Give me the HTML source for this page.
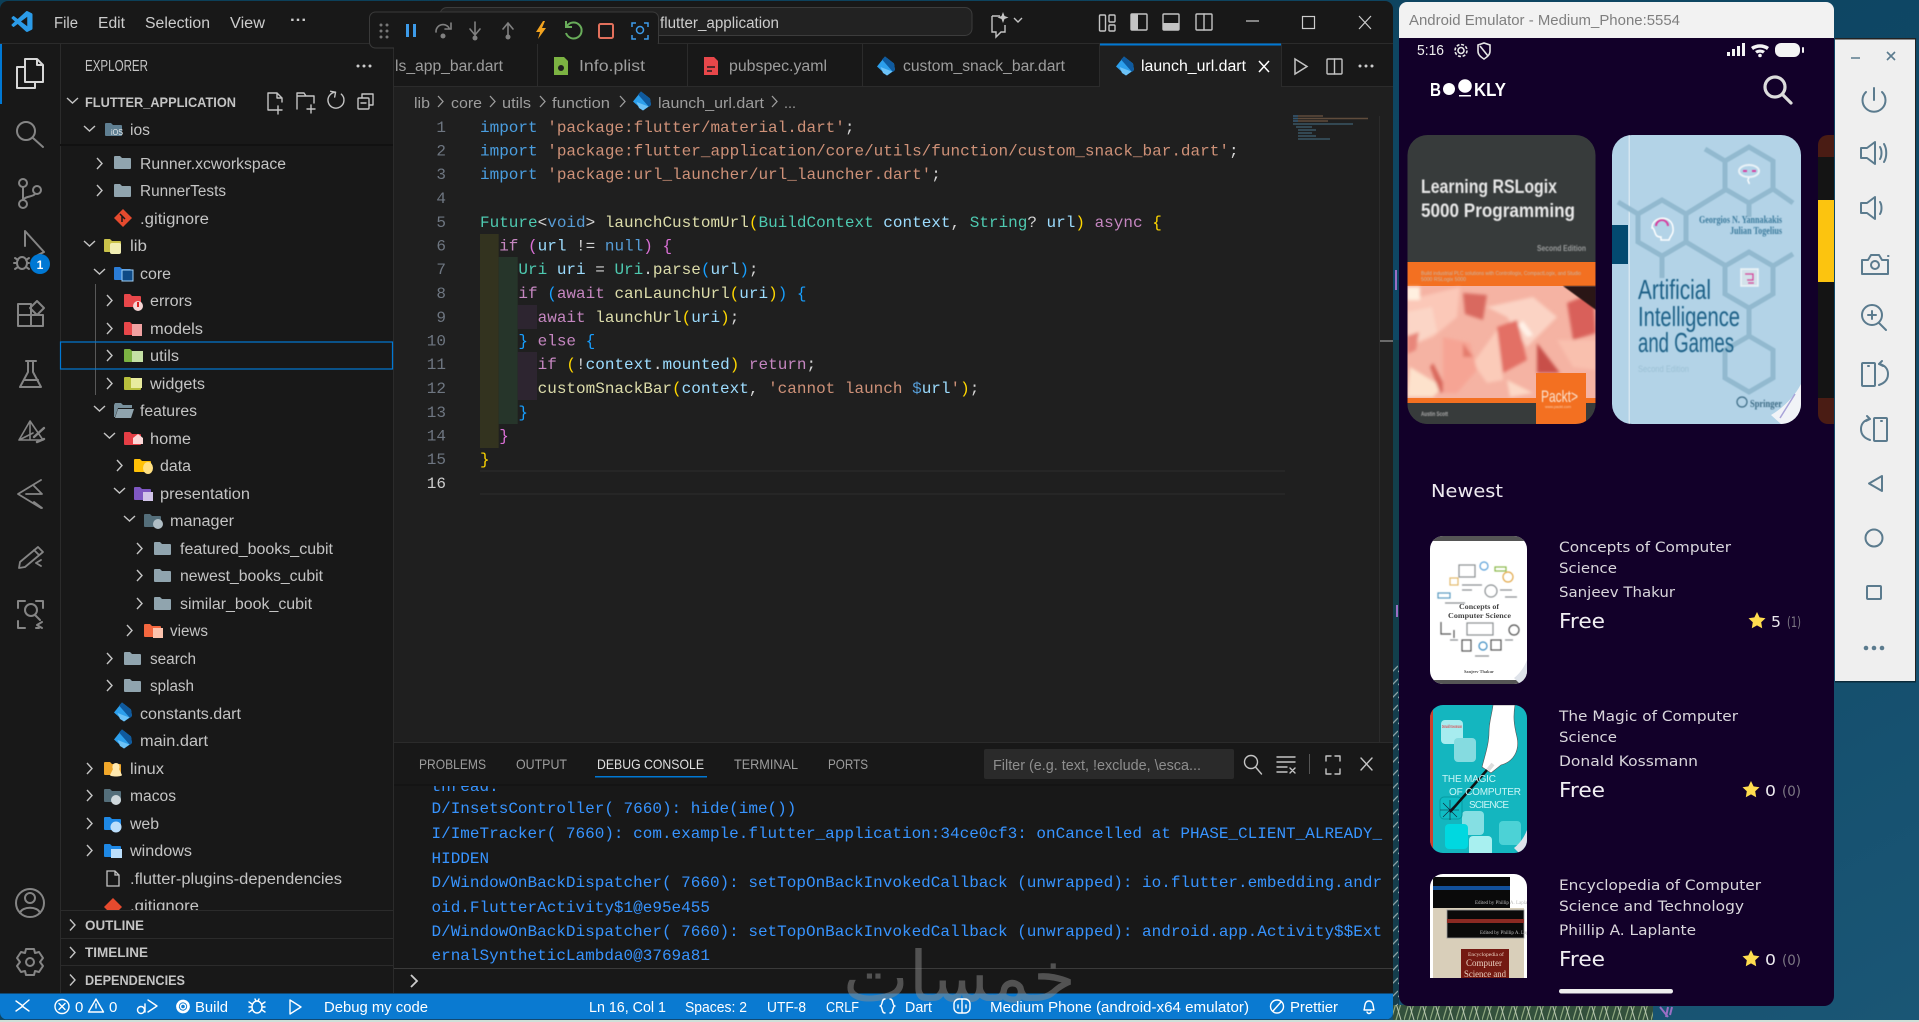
<!DOCTYPE html>
<html><head><meta charset="utf-8"><title>VS Code and Android Emulator</title>
<style>
html,body{margin:0;padding:0;width:1919px;height:1022px;overflow:hidden;background:#114a68}
svg{display:block}
text{white-space:pre}
.u{font-family:"Liberation Sans",sans-serif;font-size:15.5px;fill:#cccccc}
.t{font-family:"Liberation Sans",sans-serif;font-size:15.5px;fill:#c4c4c4}
.m{font-family:"Liberation Mono",monospace;font-size:16px;fill:#d4d4d4}
.ln{font-family:"Liberation Mono",monospace;font-size:16px;fill:#6e7681;text-anchor:end}
.c{font-family:"Liberation Mono",monospace;font-size:16px;fill:#3794ff}
.st{font-family:"Liberation Sans",sans-serif;font-size:15px;fill:#fff}
.p{font-family:"DejaVu Sans",sans-serif;font-size:14.5px;fill:#d9d6dc}
.b{font-family:"Liberation Sans",sans-serif;font-weight:bold;font-size:14px;fill:#c4c4c4}
.ic{fill:none;stroke:#858585;stroke-width:2;stroke-linecap:round;stroke-linejoin:round}
.ti{fill:none;stroke:#c4c4c4;stroke-width:1.4;stroke-linejoin:round;stroke-linecap:round}
.ch{fill:none;stroke:#c4c4c4;stroke-width:1.4}
.em{fill:none;stroke:#5b7b8e;stroke-width:2;stroke-linecap:round;stroke-linejoin:round}
.si{fill:none;stroke:#fff;stroke-width:1.4;stroke-linejoin:round;stroke-linecap:round}
</style></head><body>
<svg width="1919" height="1022" viewBox="0 0 1919 1022" xmlns="http://www.w3.org/2000/svg">
<defs>
<linearGradient id="bg" x1="0" y1="0" x2="1" y2="1"><stop offset="0" stop-color="#0c3f58"/><stop offset=".6" stop-color="#0f4866"/><stop offset="1" stop-color="#1a5675"/></linearGradient>
<pattern id="pl" width="13" height="20" patternUnits="userSpaceOnUse"><rect width="13" height="20" fill="#33503c"/><path d="M0 20L6 0M5 20L11 0" stroke="#8da67e" stroke-width="1.2"/><path d="M10 20L4 0" stroke="#bcc9b4" stroke-width="1"/></pattern>
<pattern id="pl2" width="6" height="13" patternUnits="userSpaceOnUse"><rect width="6" height="13" fill="#143d4d"/><path d="M0 9L6 3" stroke="#8ea3a6" stroke-width="1.300"/></pattern>
<filter id="bl"><feGaussianBlur stdDeviation="1.6"/></filter>
<filter id="bs"><feGaussianBlur stdDeviation=".5"/></filter>
<path id="chr" d="M0 0l5 5.5-5 5.5"/>
<path id="chd" d="M0 0l5.5 5 5.5-5"/>
<path id="fo" d="M2 1h5l2 2h8a1 1 0 0 1 1 1v9a1 1 0 0 1-1 1H2a1 1 0 0 1-1-1V2a1 1 0 0 1 1-1z"/>
<g id="dart" transform="translate(8 6)"><path d="M-1-9.500L8-2.500 9 4 1 9.500-9 .5z" fill="#2c9fec"/><path d="M-4-6.500L-1-9.500 8-2.500 9 4 7 6z" fill="#0f5a9e"/><path d="M-5.500 1L6.500 5.500 1 9.500-3 7z" fill="#6cc2f7"/></g>
<clipPath id="tree"><rect x="60" y="146" width="334" height="764"/></clipPath>
<clipPath id="list"><rect x="1399" y="500" width="435" height="478"/></clipPath>
<clipPath id="c1"><rect x="1407.500" y="135" width="188" height="289" rx="20"/></clipPath>
<clipPath id="c2"><rect x="1612" y="135" width="189" height="289" rx="20"/></clipPath>
<clipPath id="l1"><rect x="1430" y="536" width="97" height="148" rx="13"/></clipPath>
<clipPath id="l2"><rect x="1430" y="705" width="97" height="148" rx="13"/></clipPath>
<clipPath id="l3"><rect x="1430" y="874" width="97" height="148" rx="13"/></clipPath>
<clipPath id="con"><rect x="394" y="786" width="999" height="182"/></clipPath>
</defs>

<!-- desktop -->
<rect width="1919" height="1022" fill="url(#bg)"/>
<rect x="1393" y="340" width="6" height="320" fill="#123f4c"/>
<rect x="1393" y="660" width="6" height="345" fill="url(#pl2)"/>
<rect x="1393" y="1005" width="260" height="17" fill="url(#pl)"/>
<g stroke="#9a6fc4" stroke-width="2"><path d="M1396 270v20M1397 605v12"/><path d="M1660 1007l8 10M1668 1007l-2 10M1672 1007l-2 8" /></g>
<rect y="1020" width="1919" height="2" fill="#cfe0d8"/>

<!-- window -->
<rect x="0" y="1" width="1393" height="1019" rx="8" fill="#181818"/>
<!-- editor bg -->
<rect x="394" y="87" width="999" height="655" fill="#1f1f1f"/>
<rect x="0" y="43" width="1393" height="1" fill="#2b2b2b"/>
<rect x="60" y="44" width="1" height="949" fill="#2b2b2b"/>
<rect x="393" y="44" width="1" height="949" fill="#2b2b2b"/>

<!-- title bar -->
<path transform="translate(11.500 11) scale(.875)" fill="#2b9be8" d="M23.15 2.587L18.21.21a1.494 1.494 0 0 0-1.705.29l-9.46 8.63-4.12-3.128a.999.999 0 0 0-1.276.057L.327 7.261A1 1 0 0 0 .326 8.74L3.899 12 .326 15.26a1 1 0 0 0 .001 1.479L1.65 17.94a.999.999 0 0 0 1.276.057l4.12-3.128 9.46 8.63a1.492 1.492 0 0 0 1.704.29l4.942-2.377A1.5 1.5 0 0 0 24 20.06V3.939a1.5 1.5 0 0 0-.85-1.352zm-5.146 14.861L10.826 12l7.178-5.448v10.896z"/>
<g class="u"><text x="54" y="28" textLength="24" lengthAdjust="spacingAndGlyphs">File</text><text x="98" y="28" textLength="27" lengthAdjust="spacingAndGlyphs">Edit</text><text x="145" y="28" textLength="65" lengthAdjust="spacingAndGlyphs">Selection</text><text x="230" y="28" textLength="35" lengthAdjust="spacingAndGlyphs">View</text><text x="290" y="25" textLength="17" lengthAdjust="spacingAndGlyphs" font-weight="bold">···</text></g>
<rect x="440" y="7.500" width="532" height="28" rx="7" fill="#222" stroke="#3c3c3c"/>
<text class="u" x="660" y="28" textLength="119" lengthAdjust="spacingAndGlyphs">flutter_application</text>
<!-- debug toolbar -->
<rect x="369.500" y="12" width="289" height="36" rx="6" fill="#181818" stroke="#3a3a3a"/>
<g fill="#777"><circle cx="381" cy="25" r="1.500"/><circle cx="387" cy="25" r="1.500"/><circle cx="381" cy="31" r="1.500"/><circle cx="387" cy="31" r="1.500"/><circle cx="381" cy="37" r="1.500"/><circle cx="387" cy="37" r="1.500"/></g>
<g fill="#3d9be9"><rect x="406" y="24" width="3" height="13"/><rect x="413" y="24" width="3" height="13"/></g>
<g fill="none" stroke="#808080" stroke-width="1.600" stroke-linecap="round"><path d="M436 32a7 7 0 0 1 13-4"/><path d="M451 23v6h-6"/><path d="M475 22v13M470 29l5 6 5-6"/><path d="M508 37V24M503 29l5-6 5 6"/></g>
<g fill="#808080"><circle cx="443" cy="36" r="2.500"/><circle cx="475" cy="38" r="2.500"/><circle cx="508" cy="37" r="2.500"/></g>
<path d="M543 21l-7 11h4l-2 7 8-11h-4l3-7z" fill="#f2a31f"/>
<path d="M567 26a8 8 0 1 1-1 7M566 21v6h6" fill="none" stroke="#69ad5a" stroke-width="2"/>
<rect x="599" y="24" width="14" height="14" rx="1.500" fill="none" stroke="#e2705c" stroke-width="2"/>
<g fill="none" stroke="#3d9be9" stroke-width="1.500"><path d="M632 27v-4h4M648 27v-4h-4M632 35v4h4M648 35v4h-4"/><circle cx="640" cy="30" r="3.500"/></g>
<!-- title right -->
<path d="M992 16h8M992 16v16h4v5l5-5h4v-7" fill="none" stroke="#c4c4c4" stroke-width="1.400"/><path d="M1003 12l1.500 4 4 1.500-4 1.500-1.500 4-1.500-4-4-1.500 4-1.500z" fill="#c4c4c4"/>
<path d="M1014 18l4 4 4-4" class="ch"/>
<g class="ti"><rect x="1099.500" y="15" width="6" height="16" rx="1"/><rect x="1109" y="15" width="6" height="7" rx="1"/><rect x="1109" y="25" width="6" height="6" rx="1"/><rect x="1131" y="14" width="16" height="16" rx="1"/><rect x="1163" y="14" width="16" height="16" rx="1"/><rect x="1196" y="14" width="16" height="16" rx="1"/><path d="M1204 14v16"/></g>
<rect x="1131" y="14" width="7" height="16" fill="#c4c4c4"/><rect x="1163" y="23" width="16" height="7" fill="#c4c4c4"/>
<path d="M1246 21h13" stroke="#ccc" stroke-width="1.200"/>
<rect x="1302.500" y="16.500" width="12" height="12" fill="none" stroke="#ccc" stroke-width="1.200"/>
<path d="M1359 16l12 13M1371 16l-12 13" stroke="#ccc" stroke-width="1.200"/>

<!-- activity bar -->
<rect x="0" y="44" width="2" height="60" fill="#0078d4"/>
<g fill="none" stroke="#d7d7d7" stroke-width="2" stroke-linejoin="round"><path d="M25 67H17v21h18v-6"/><path d="M25 59h12l6 6v17H25z" fill="#181818"/><path d="M37 59v6h6"/></g>
<g class="ic">
<circle cx="26" cy="131" r="9"/><path d="M33 138l10 9"/>
<circle cx="23" cy="183" r="4"/><circle cx="23" cy="204" r="4"/><circle cx="37" cy="190" r="4"/><path d="M23 187v13M35 194c-2 3-10 2-12 6"/>
<path d="M25 246V231L44 252l-6 3"/><ellipse cx="22" cy="263" rx="5" ry="6"/><path d="M15 258l3 2M14 263h3M15 269l3-2M29 258l-3 2M29 263h-2M29 269l-3-2"/>
<path d="M18 304h13v22H18zM18 315h25v11H31"/><path d="M37 301l7 7-7 7-7-7z"/>
<path d="M26 361h10M28 361v11l-8 15h21l-8-15v-11M24 380h14"/>
<path d="M30 421l-11 19h24zM30 421v19M19 440l14-7" stroke-width="1.600"/><path d="M34 437l10-9M37 442l7-3" stroke-width="2.400"/>
<path d="M41 480l-23 14 23 14M26 494h16l-8-8M34 502l8 6" stroke-width="1.800"/>
<path d="M20 562l18-15 5 5-18 15-6 1zM34 550l5 5M36 563l5-3M36 563l5 3" stroke-width="1.800"/>
<path d="M18 608v-7h7M43 608v-7h-7M18 621v7h7M36 628h3" /><circle cx="31" cy="610" r="6"/><path d="M35 615l5 5M37 625l5-3M37 625l5 3"/>
<circle cx="30" cy="903" r="14"/><circle cx="30" cy="898" r="5"/><path d="M20 913c2-7 18-7 20 0"/>
<path d="M26 949h8l1 4 4-1 4 6-3 4 3 4-4 6-4-1-1 4h-8l-1-4-4 1-4-6 3-4-3-4 4-6 4 1z"/><circle cx="30" cy="962" r="4"/>
</g>
<circle cx="40" cy="264" r="10" fill="#0078d4"/><text x="40" y="269" font-family="Liberation Sans" font-size="12" font-weight="bold" fill="#fff" text-anchor="middle">1</text>

<!-- sidebar -->
<text class="t" x="85" y="71" textLength="63" lengthAdjust="spacingAndGlyphs" font-size="14">EXPLORER</text>
<g fill="#ccc"><circle cx="358" cy="66" r="1.500"/><circle cx="364" cy="66" r="1.500"/><circle cx="370" cy="66" r="1.500"/></g>
<use href="#chd" x="67" y="98" class="ch"/>
<text class="b" x="85" y="107" textLength="151" lengthAdjust="spacingAndGlyphs">FLUTTER_APPLICATION</text>
<g class="ti"><path d="M268 110v-17h9l5 5v4M277 93v5h5M268 110h6M278 106v8M274 110h8"/><path d="M297 109V93h7l2 3h8v7M297 96h17M311 105v8M307 109h8"/><path d="M340 93a8 8 0 1 1-6-1M329 92l5 0 0 5" transform="rotate(10 334 101)"/><rect x="358" y="98" width="11" height="11" rx="1"/><path d="M362 98v-4h11v11h-4M361 103h5"/></g>
<use href="#chd" x="84" y="126" class="ch"/>
<use href="#fo" x="104" y="122" fill="#5f7f92"/><text font-family="Liberation Sans,sans-serif" font-size="8" fill="#e4e8ea" x="111" y="135" textLength="12" lengthAdjust="spacingAndGlyphs">iOS</text>
<text class="t" x="130" y="135" textLength="20" lengthAdjust="spacingAndGlyphs">ios</text>
<rect x="60" y="144" width="333" height="2" fill="#111"/>

<g clip-path="url(#tree)">
<g class="ch">
<use href="#chr" x="97" y="158"/><use href="#chr" x="97" y="185"/>
<use href="#chd" x="84" y="241"/><use href="#chd" x="94" y="269"/>
<use href="#chr" x="107" y="295"/><use href="#chr" x="107" y="323"/><use href="#chr" x="107" y="350"/><use href="#chr" x="107" y="378"/>
<use href="#chd" x="94" y="406"/><use href="#chd" x="104" y="433"/>
<use href="#chr" x="117" y="460"/><use href="#chd" x="114" y="488"/><use href="#chd" x="124" y="516"/>
<use href="#chr" x="137" y="543"/><use href="#chr" x="137" y="570"/><use href="#chr" x="137" y="598"/>
<use href="#chr" x="127" y="625"/><use href="#chr" x="107" y="653"/><use href="#chr" x="107" y="680"/>
<use href="#chr" x="87" y="763"/><use href="#chr" x="87" y="790"/><use href="#chr" x="87" y="818"/><use href="#chr" x="87" y="845"/>
</g>
<rect x="95" y="284" width="1" height="111" fill="#585858"/>
<!-- folder icons -->
<use href="#fo" x="113" y="155" fill="#90a4ae"/>
<use href="#fo" x="113" y="183" fill="#90a4ae"/>
<path d="M123 209l9 9-9 9-9-9z" fill="#e64a2e"/><path d="M120 214l5 5M122 216v6" stroke="#181818" stroke-width="1.500"/>
<use href="#fo" x="103" y="238" fill="#c9c24a"/><rect x="110" y="243" width="11" height="11" rx="2" fill="#f1eeb3"/>
<use href="#fo" x="113" y="266" fill="#2a7cd6"/><rect x="122" y="270" width="11" height="11" fill="#0e4a86" stroke="#9fd0f7"/>
<use href="#fo" x="123" y="293" fill="#e8474a"/><circle cx="138" cy="306" r="5" fill="#f6d5d5"/><rect x="137" y="302" width="2" height="5" fill="#d22"/>
<use href="#fo" x="123" y="321" fill="#e8474a"/><rect x="132" y="324" width="10" height="12" fill="#f1a2a2"/>
<use href="#fo" x="123" y="348" fill="#7cb342"/><rect x="132" y="351" width="11" height="11" fill="#c5e1a5"/>
<use href="#fo" x="123" y="376" fill="#b8bf3c"/><rect x="131" y="378" width="11" height="10" fill="#e8eb9e"/>
<path d="M114 405l1-2h6l2 2h9v3h-14l-3 9h-1z" fill="#78909c"/><path d="M118 409h16l-3 9h-16z" fill="#90a4ae"/>
<use href="#fo" x="123" y="431" fill="#e53e45"/><path d="M133 444v-6l5-4 5 4v6z" fill="#fbd7d7"/>
<use href="#fo" x="133" y="458" fill="#ffc107"/><ellipse cx="148" cy="468" rx="5" ry="6" fill="#ffe082"/>
<use href="#fo" x="133" y="486" fill="#7e57c2"/><rect x="143" y="492" width="10" height="9" fill="#d1c4e9"/>
<use href="#fo" x="143" y="513" fill="#546e7a"/><circle cx="158" cy="524" r="5" fill="#b0bec5"/>
<use href="#fo" x="153" y="541" fill="#90a4ae"/><use href="#fo" x="153" y="568" fill="#90a4ae"/><use href="#fo" x="153" y="596" fill="#90a4ae"/>
<use href="#fo" x="143" y="623" fill="#f4673f"/><rect x="153" y="628" width="10" height="10" fill="#fcc3ad"/>
<use href="#fo" x="123" y="651" fill="#90a4ae"/><use href="#fo" x="123" y="678" fill="#90a4ae"/>
<use href="#dart" x="115" y="706"/><use href="#dart" x="115" y="733"/>
<use href="#fo" x="103" y="761" fill="#f0a72a"/><path d="M116 763c4 0 4 5 3 6l3 6c0 2-12 2-12 0l3-6c-1-1-1-6 3-6z" fill="#ffe9b0"/>
<use href="#fo" x="103" y="788" fill="#546e7a"/><circle cx="116" cy="800" r="5" fill="#cfd8dc"/>
<use href="#fo" x="103" y="816" fill="#1e88e5"/><circle cx="116" cy="827" r="5.500" fill="#bbdefb"/>
<use href="#fo" x="103" y="843" fill="#1e88e5"/><rect x="111" y="849" width="11" height="9" fill="#bbdefb"/>
<path d="M107 871h8l4 4v11h-12zM115 871v4h4" fill="none" stroke="#c4c4c4" stroke-width="1.300"/>
<path d="M113 898l9 9-9 9-9-9z" fill="#e64a2e"/>
<!-- labels -->
<g class="t">
<text x="140" y="169" textLength="146" lengthAdjust="spacingAndGlyphs">Runner.xcworkspace</text>
<text x="140" y="196" textLength="86" lengthAdjust="spacingAndGlyphs">RunnerTests</text>
<text x="140" y="224" textLength="69" lengthAdjust="spacingAndGlyphs">.gitignore</text>
<text x="130" y="251" textLength="17" lengthAdjust="spacingAndGlyphs">lib</text>
<text x="140" y="279" textLength="31" lengthAdjust="spacingAndGlyphs">core</text>
<text x="150" y="306" textLength="42" lengthAdjust="spacingAndGlyphs">errors</text>
<text x="150" y="334" textLength="53" lengthAdjust="spacingAndGlyphs">models</text>
<text x="150" y="361" textLength="29" lengthAdjust="spacingAndGlyphs">utils</text>
<text x="150" y="389" textLength="55" lengthAdjust="spacingAndGlyphs">widgets</text>
<text x="140" y="416" textLength="57" lengthAdjust="spacingAndGlyphs">features</text>
<text x="150" y="444" textLength="41" lengthAdjust="spacingAndGlyphs">home</text>
<text x="160" y="471" textLength="31" lengthAdjust="spacingAndGlyphs">data</text>
<text x="160" y="499" textLength="90" lengthAdjust="spacingAndGlyphs">presentation</text>
<text x="170" y="526" textLength="64" lengthAdjust="spacingAndGlyphs">manager</text>
<text x="180" y="554" textLength="153" lengthAdjust="spacingAndGlyphs">featured_books_cubit</text>
<text x="180" y="581" textLength="143" lengthAdjust="spacingAndGlyphs">newest_books_cubit</text>
<text x="180" y="609" textLength="132" lengthAdjust="spacingAndGlyphs">similar_book_cubit</text>
<text x="170" y="636" textLength="38" lengthAdjust="spacingAndGlyphs">views</text>
<text x="150" y="664" textLength="46" lengthAdjust="spacingAndGlyphs">search</text>
<text x="150" y="691" textLength="44" lengthAdjust="spacingAndGlyphs">splash</text>
<text x="140" y="719" textLength="101" lengthAdjust="spacingAndGlyphs">constants.dart</text>
<text x="140" y="746" textLength="68" lengthAdjust="spacingAndGlyphs">main.dart</text>
<text x="130" y="774" textLength="34" lengthAdjust="spacingAndGlyphs">linux</text>
<text x="130" y="801" textLength="46" lengthAdjust="spacingAndGlyphs">macos</text>
<text x="130" y="829" textLength="29" lengthAdjust="spacingAndGlyphs">web</text>
<text x="130" y="856" textLength="62" lengthAdjust="spacingAndGlyphs">windows</text>
<text x="130" y="884" textLength="212" lengthAdjust="spacingAndGlyphs">.flutter-plugins-dependencies</text>
<text x="130" y="911" textLength="69" lengthAdjust="spacingAndGlyphs">.gitignore</text>
</g>
</g>
<rect x="60.500" y="342" width="332" height="27" fill="none" stroke="#0078d4" stroke-width="1.200"/>
<rect x="60" y="910" width="333" height="1" fill="#2b2b2b"/><rect x="60" y="938" width="333" height="1" fill="#2b2b2b"/><rect x="60" y="965" width="333" height="1" fill="#2b2b2b"/>
<g class="ch"><use href="#chr" x="70" y="919.500"/><use href="#chr" x="70" y="947"/><use href="#chr" x="70" y="974.500"/></g>
<g class="b"><text x="85" y="930" textLength="59" lengthAdjust="spacingAndGlyphs">OUTLINE</text><text x="85" y="957" textLength="63" lengthAdjust="spacingAndGlyphs">TIMELINE</text><text x="85" y="985" textLength="100" lengthAdjust="spacingAndGlyphs">DEPENDENCIES</text></g>

<!-- tabs -->
<rect x="394" y="44" width="999" height="43" fill="#181818"/>
<rect x="394" y="86" width="999" height="1" fill="#2b2b2b"/>
<rect x="1100" y="44" width="181" height="43" fill="#1f1f1f"/><rect x="1100" y="43.500" width="181" height="2" fill="#0078d4"/>
<g fill="#2b2b2b"><rect x="537" y="44" width="1" height="43"/><rect x="687" y="44" width="1" height="43"/><rect x="862" y="44" width="1" height="43"/><rect x="1099" y="44" width="1" height="43"/><rect x="1281" y="44" width="1" height="43"/></g>
<g class="t">
<text x="395" y="71" textLength="108" lengthAdjust="spacingAndGlyphs" style="fill:#9d9d9d">ls_app_bar.dart</text>
<text x="579" y="71" textLength="66" lengthAdjust="spacingAndGlyphs" style="fill:#9d9d9d">Info.plist</text>
<text x="729" y="71" textLength="98" lengthAdjust="spacingAndGlyphs" style="fill:#9d9d9d">pubspec.yaml</text>
<text x="903" y="71" textLength="162" lengthAdjust="spacingAndGlyphs" style="fill:#9d9d9d">custom_snack_bar.dart</text>
<text x="1141" y="71" textLength="105" lengthAdjust="spacingAndGlyphs" style="fill:#fff">launch_url.dart</text>
</g>
<path d="M554 57h10l4 4v14h-14z" fill="#7cb342"/><circle cx="561" cy="68" r="3" fill="#1f1f1f"/>
<path d="M704 57h10l4 4v14h-14z" fill="#e8474a"/><path d="M707 67h8M707 71h5" stroke="#1f1f1f" stroke-width="1.600"/>
<use href="#dart" x="878" y="60"/><use href="#dart" x="1117" y="60"/>
<path d="M1259 61l10 11M1269 61l-10 11" stroke="#fff" stroke-width="1.500"/>
<path d="M1295 59l12 7.500-12 7.500z" fill="none" stroke="#c4c4c4" stroke-width="1.500"/>
<g class="ti"><rect x="1327" y="59" width="15" height="15" rx="1"/><path d="M1334.500 59v15"/></g>
<g fill="#ccc"><circle cx="1360" cy="66" r="1.500"/><circle cx="1366" cy="66" r="1.500"/><circle cx="1372" cy="66" r="1.500"/></g>

<!-- breadcrumb -->
<g class="t" style="font-size:15px">
<text x="414" y="108" textLength="16" lengthAdjust="spacingAndGlyphs" style="fill:#9d9d9d">lib</text>
<text x="451" y="108" textLength="31" lengthAdjust="spacingAndGlyphs" style="fill:#9d9d9d">core</text>
<text x="502" y="108" textLength="29" lengthAdjust="spacingAndGlyphs" style="fill:#9d9d9d">utils</text>
<text x="552" y="108" textLength="58" lengthAdjust="spacingAndGlyphs" style="fill:#9d9d9d">function</text>
<text x="658" y="108" textLength="106" lengthAdjust="spacingAndGlyphs" style="fill:#9d9d9d">launch_url.dart</text>
<text x="784" y="108" textLength="12" lengthAdjust="spacingAndGlyphs" style="fill:#9d9d9d">...</text>
</g>
<g fill="none" stroke="#9d9d9d" stroke-width="1.300"><use href="#chr" x="438" y="96"/><use href="#chr" x="490" y="96"/><use href="#chr" x="540" y="96"/><use href="#chr" x="620" y="96"/><use href="#chr" x="772" y="96"/></g>
<use href="#dart" x="634" y="95"/>

<!-- indent rainbow -->
<rect x="480" y="234" width="18.700" height="214" fill="#33331f"/>
<rect x="498.700" y="257" width="19" height="167" fill="#26352a"/>
<g fill="#2d2530"><rect x="517.700" y="305" width="19.300" height="24"/><rect x="517.700" y="352" width="19.300" height="48"/></g>
<path d="M480 471h805M480 494h805" stroke="#2b2b2b" stroke-width="1.200" fill="none"/>
<!-- line numbers -->
<g class="ln">
<text x="446" y="132">1</text><text x="446" y="155.500">2</text><text x="446" y="179">3</text><text x="446" y="203">4</text><text x="446" y="227">5</text><text x="446" y="250.500">6</text><text x="446" y="274">7</text><text x="446" y="298">8</text><text x="446" y="322">9</text><text x="446" y="345.500">10</text><text x="446" y="369">11</text><text x="446" y="393">12</text><text x="446" y="417">13</text><text x="446" y="440.500">14</text><text x="446" y="464">15</text><text x="446" y="488" style="fill:#ccc">16</text>
</g>
<!-- code -->
<g class="m" xml:space="preserve">
<text x="480" y="132"><tspan fill="#4a9ee0">import</tspan> <tspan fill="#ce9178">'package:flutter/material.dart'</tspan>;</text>
<text x="480" y="155.500"><tspan fill="#4a9ee0">import</tspan> <tspan fill="#ce9178">'package:flutter_application/core/utils/function/custom_snack_bar.dart'</tspan>;</text>
<text x="480" y="179"><tspan fill="#4a9ee0">import</tspan> <tspan fill="#ce9178">'package:url_launcher/url_launcher.dart'</tspan>;</text>
<text x="480" y="227"><tspan fill="#4ec9b0">Future</tspan>&lt;<tspan fill="#569cd6">void</tspan>&gt; <tspan fill="#dcdcaa">launchCustomUrl</tspan><tspan fill="#ffd700">(</tspan><tspan fill="#4ec9b0">BuildContext</tspan> <tspan fill="#9cdcfe">context</tspan>, <tspan fill="#4ec9b0">String</tspan>? <tspan fill="#9cdcfe">url</tspan><tspan fill="#ffd700">)</tspan> <tspan fill="#c586c0">async</tspan> <tspan fill="#ffd700">{</tspan></text>
<text x="480" y="250.500">  <tspan fill="#c586c0">if</tspan> <tspan fill="#da70d6">(</tspan><tspan fill="#9cdcfe">url</tspan> != <tspan fill="#569cd6">null</tspan><tspan fill="#da70d6">)</tspan> <tspan fill="#da70d6">{</tspan></text>
<text x="480" y="274">    <tspan fill="#4ec9b0">Uri</tspan> <tspan fill="#9cdcfe">uri</tspan> = <tspan fill="#4ec9b0">Uri</tspan>.<tspan fill="#dcdcaa">parse</tspan><tspan fill="#179fff">(</tspan><tspan fill="#9cdcfe">url</tspan><tspan fill="#179fff">)</tspan>;</text>
<text x="480" y="298">    <tspan fill="#c586c0">if</tspan> <tspan fill="#179fff">(</tspan><tspan fill="#c586c0">await</tspan> <tspan fill="#dcdcaa">canLaunchUrl</tspan><tspan fill="#ffd700">(</tspan><tspan fill="#9cdcfe">uri</tspan><tspan fill="#ffd700">)</tspan><tspan fill="#179fff">)</tspan> <tspan fill="#179fff">{</tspan></text>
<text x="480" y="322">      <tspan fill="#c586c0">await</tspan> <tspan fill="#dcdcaa">launchUrl</tspan><tspan fill="#ffd700">(</tspan><tspan fill="#9cdcfe">uri</tspan><tspan fill="#ffd700">)</tspan>;</text>
<text x="480" y="345.500">    <tspan fill="#179fff">}</tspan> <tspan fill="#c586c0">else</tspan> <tspan fill="#179fff">{</tspan></text>
<text x="480" y="369">      <tspan fill="#c586c0">if</tspan> <tspan fill="#ffd700">(</tspan>!<tspan fill="#9cdcfe">context</tspan>.<tspan fill="#9cdcfe">mounted</tspan><tspan fill="#ffd700">)</tspan> <tspan fill="#c586c0">return</tspan>;</text>
<text x="480" y="393">      <tspan fill="#dcdcaa">customSnackBar</tspan><tspan fill="#ffd700">(</tspan><tspan fill="#9cdcfe">context</tspan>, <tspan fill="#ce9178">'cannot launch </tspan><tspan fill="#569cd6">$</tspan><tspan fill="#9cdcfe">url</tspan><tspan fill="#ce9178">'</tspan><tspan fill="#ffd700">)</tspan>;</text>
<text x="480" y="417">    <tspan fill="#179fff">}</tspan></text>
<text x="480" y="440.500">  <tspan fill="#da70d6">}</tspan></text>
<text x="480" y="464"><tspan fill="#ffd700">}</tspan></text>
</g>
<!-- minimap -->
<g opacity=".6">
<path d="M1293 116h30M1293 118.500h75M1293 121h35" stroke="#8a6a50" stroke-width="1.500"/>
<path d="M1293 124h60M1296 127h16M1298 130h18M1298 133h14M1298 136h18M1298 139h32" stroke="#4d7c93" stroke-width="1.500"/>
<path d="M1293 116h5M1293 118.500h5M1293 121h5" stroke="#3b79a8" stroke-width="1.500"/>
</g>
<rect x="1379" y="116" width="1" height="626" fill="#2b2b2b"/>
<rect x="1380" y="340" width="13" height="2" fill="#6a6a6a"/>

<!-- panel -->
<rect x="394" y="742" width="999" height="251" fill="#181818"/>
<rect x="394" y="742" width="999" height="1" fill="#2b2b2b"/>
<g class="t" style="font-size:14px">
<text x="419" y="769" textLength="67" lengthAdjust="spacingAndGlyphs" style="fill:#9d9d9d">PROBLEMS</text>
<text x="516" y="769" textLength="51" lengthAdjust="spacingAndGlyphs" style="fill:#9d9d9d">OUTPUT</text>
<text x="597" y="769" textLength="107" lengthAdjust="spacingAndGlyphs" style="fill:#e0e0e0">DEBUG CONSOLE</text>
<text x="734" y="769" textLength="64" lengthAdjust="spacingAndGlyphs" style="fill:#9d9d9d">TERMINAL</text>
<text x="828" y="769" textLength="40" lengthAdjust="spacingAndGlyphs" style="fill:#9d9d9d">PORTS</text>
</g>
<rect x="595" y="776" width="112" height="1.500" fill="#0078d4"/>
<rect x="984" y="749" width="250" height="30" rx="2" fill="#2a2a2a"/>
<text class="t" x="993" y="770" textLength="208" lengthAdjust="spacingAndGlyphs" style="fill:#8e8e8e;font-size:15px">Filter (e.g. text, !exclude, \esca...</text>
<g class="ti" stroke-width="1.500"><circle cx="1251" cy="762" r="6.500"/><path d="M1255.500 767l6 7"/><path d="M1277 757h18M1277 762h18M1277 767h10M1277 772h10M1290 768l5 5M1295 768l-5 5"/><path d="M1326 761v-5h5M1340 761v-5h-5M1326 769v5h5M1340 769v5h-5"/><path d="M1361 758l11 12M1372 758l-11 12"/></g>
<rect x="1309" y="754" width="1" height="20" fill="#555"/>
<rect x="394" y="784" width="999" height="2" fill="#141414"/>
<g clip-path="url(#con)"><g class="c">
<text x="431.500" y="791">thread:</text>
<text x="431.500" y="813">D/InsetsController( 7660): hide(ime())</text>
<text x="431.500" y="838">I/ImeTracker( 7660): com.example.flutter_application:34ce0cf3: onCancelled at PHASE_CLIENT_ALREADY_</text>
<text x="431.500" y="863">HIDDEN</text>
<text x="431.500" y="887">D/WindowOnBackDispatcher( 7660): setTopOnBackInvokedCallback (unwrapped): io.flutter.embedding.andr</text>
<text x="431.500" y="912">oid.FlutterActivity$1@e95e455</text>
<text x="431.500" y="936">D/WindowOnBackDispatcher( 7660): setTopOnBackInvokedCallback (unwrapped): android.app.Activity$$Ext</text>
<text x="431.500" y="960">ernalSyntheticLambda0@3769a81</text>
</g></g>
<rect x="394" y="968" width="999" height="1" fill="#3a3a3a"/>
<path d="M411 975l6 6-6 6" fill="none" stroke="#ccc" stroke-width="1.800"/>

<!-- status bar -->
<path d="M0 993.500h1393v19a7 7 0 0 1-7 7H7a7 7 0 0 1-7-7z" fill="#0a7ad1"/>
<text x="843" y="1001" font-family="DejaVu Sans,sans-serif" font-size="70" fill="#8c8c8c" opacity=".5" textLength="233" lengthAdjust="spacingAndGlyphs">خمسات</text>
<path d="M16 1001l7 5-7 5M29 1000l-7 6 7 5" class="si"/>
<g class="si"><circle cx="62" cy="1006.500" r="7"/><path d="M59 1003.500l6 6M65 1003.500l-6 6"/><path d="M96 999l7.500 13h-15zM96 1004v4"/><path d="M148 1000l9 6-9 6M145 1004l0 8"/><circle cx="141" cy="1010" r="3.500"/>
<circle cx="183" cy="1006.500" r="5.500" stroke-width="2.800" stroke-dasharray="2.800 1.500"/><circle cx="183" cy="1006.500" r="2.500"/>
<ellipse cx="257" cy="1007" rx="5" ry="6"/><path d="M249 1002l3 2M249 1007h3M249 1012l3-2M265 1002l-3 2M265 1007h-3M265 1012l-3-2M255 999l1 2M259 999l-1 2"/>
<path d="M290 1000l11 7-11 7z"/>
<path d="M885 999c-4 0-2 7-5 7 3 0 1 7 5 7M890 999c4 0 2 7 5 7-3 0-1 7-5 7"/>
<rect x="954" y="999" width="16" height="14" rx="5"/><path d="M962 999v14M958 1005v3M966 1005v3"/>
<circle cx="1277" cy="1006.500" r="6.500"/><path d="M1273 1011l8-9"/>
<path d="M1364 1010c1-2 0-9 5-9s4 7 5 9zM1367 1012c1 2 3 2 4 0"/></g>
<g class="st">
<text x="75" y="1012">0</text><text x="109" y="1012">0</text>
<text x="195" y="1012" textLength="33" lengthAdjust="spacingAndGlyphs">Build</text>
<text x="324" y="1012" textLength="104" lengthAdjust="spacingAndGlyphs">Debug my code</text>
<text x="589" y="1012" textLength="77" lengthAdjust="spacingAndGlyphs">Ln 16, Col 1</text>
<text x="685" y="1012" textLength="62" lengthAdjust="spacingAndGlyphs">Spaces: 2</text>
<text x="767" y="1012" textLength="39" lengthAdjust="spacingAndGlyphs">UTF-8</text>
<text x="826" y="1012" textLength="33" lengthAdjust="spacingAndGlyphs">CRLF</text>
<text x="905" y="1012" textLength="27" lengthAdjust="spacingAndGlyphs">Dart</text>
<text x="990" y="1012" textLength="259" lengthAdjust="spacingAndGlyphs">Medium Phone (android-x64 emulator)</text>
<text x="1290" y="1012" textLength="48" lengthAdjust="spacingAndGlyphs">Prettier</text>
</g>

<!-- emulator -->
<path d="M1399 10a8 8 0 0 1 8-8h419a8 8 0 0 1 8 8v29h-435z" fill="#f2f2f2"/>
<text x="1409" y="25" font-family="Liberation Sans,sans-serif" font-size="14.500" fill="#7f7f7f" textLength="271" lengthAdjust="spacingAndGlyphs">Android Emulator - Medium_Phone:5554</text>
<path d="M1399 38h435v958a10 10 0 0 1-10 10h-415a10 10 0 0 1-10-10z" fill="#120029"/>
<text x="1417" y="55" font-family="Liberation Sans,sans-serif" font-size="15" fill="#eee" textLength="27" lengthAdjust="spacingAndGlyphs">5:16</text>
<g fill="none" stroke="#e6e6e6" stroke-width="1.600"><circle cx="1461" cy="50.500" r="3"/><circle cx="1461" cy="50.500" r="6" stroke-dasharray="3 1.700"/><path d="M1478 45l6-2 6 2v6c0 4-3 6-6 8-3-2-6-4-6-8z"/><path d="M1480 46l8 10"/></g>
<g fill="#f4f4f4"><rect x="1727" y="52" width="3" height="4"/><rect x="1732" y="49" width="3" height="7"/><rect x="1737" y="46" width="3" height="10"/><rect x="1742" y="43" width="3" height="13" /><path d="M1751 47a16 16 0 0 1 18 0l-2 3a12 12 0 0 0-14 0z"/><path d="M1755 51a10 10 0 0 1 10 0l-2 2.500a6 6 0 0 0-6 0z"/><circle cx="1760" cy="55.500" r="1.800"/><rect x="1775" y="43" width="25" height="14" rx="6"/><rect x="1802" y="47" width="2" height="6" rx="1"/></g>
<!-- Bookly logo -->
<text x="1430" y="96" font-family="Liberation Sans,sans-serif" font-weight="bold" font-size="18" fill="#fff" textLength="11" lengthAdjust="spacingAndGlyphs">B</text>
<circle cx="1449" cy="89" r="6" fill="#fff"/><circle cx="1465" cy="86" r="6.800" fill="#fff"/><rect x="1459" y="95" width="12" height="1.500" fill="#fff"/>
<text x="1474" y="96" font-family="Liberation Sans,sans-serif" font-weight="bold" font-size="18" fill="#fff" textLength="32" lengthAdjust="spacingAndGlyphs">KLY</text>
<g fill="none" stroke="#dcdcdc" stroke-width="3.200"><circle cx="1775" cy="87" r="10"/><path d="M1783 95l8 8" stroke-linecap="round"/></g>

<!-- Book 1 -->
<g clip-path="url(#c1)">
<rect x="1407" y="135" width="189" height="289" fill="#373b3b"/>
<rect x="1407" y="262" width="189" height="24" fill="#f37021"/>
<rect x="1407" y="286" width="189" height="114" fill="#f5b3a3"/>
<g filter="url(#bl)">
<path d="M1407 300L1460 287 1457 317 1433 337 1407 347z" fill="#fbc8b8"/>
<path d="M1407 287h13v13h-13z" fill="#fff0e0"/>
<path d="M1463 293l24 2-4 25-18-6z" fill="#d9695f"/>
<path d="M1487 307L1533 297 1557 317 1527 347 1507 317z" fill="#fbd3c4"/>
<path d="M1497 327L1517 320 1527 360 1503 373z" fill="#e36f65"/>
<path d="M1473 363L1497 330 1503 380 1487 383z" fill="#fbcbb9"/>
<path d="M1537 343L1560 373 1537 373z" fill="#c8504a"/>
<path d="M1567 303L1593 293 1596 333 1573 340z" fill="#d9605a"/>
<path d="M1557 340h39v30l-23-3z" fill="#f9c0ae"/>
<path d="M1410 367L1443 387 1433 397 1407 397z" fill="#fde2cc"/>
<path d="M1433 363L1447 390 1440 393 1430 367z" fill="#d9685c"/>
<path d="M1443 337L1470 343 1477 370 1457 393 1443 393z" fill="#f6a494"/>
<path d="M1463 343L1473 357 1463 357z" fill="#e47a6c"/>
<path d="M1507 380L1533 393 1510 397z" fill="#fcd8c6"/>
<path d="M1407 312l25-5 5 25-30 15z" fill="#fbd5c6"/>
<path d="M1407 336l12-4-3 18-9 4z" fill="#e8867a"/>
<path d="M1518 325l5-4 10 14-6 2z" fill="#fff2e8"/>
</g>
<path d="M1563 286h33v24z" fill="#2a1412" filter="url(#bs)"/>
<rect x="1407" y="398" width="189" height="5" fill="#f37021"/>
<rect x="1407" y="403" width="189" height="21" fill="#373b3b"/>
<rect x="1536" y="373" width="50" height="51" fill="#f37021"/>
<g filter="url(#bs)">
<text x="1421" y="193" font-family="Liberation Sans,sans-serif" font-weight="bold" font-size="19" fill="#e8e8e8" textLength="136" lengthAdjust="spacingAndGlyphs">Learning RSLogix</text>
<text x="1421" y="217" font-family="Liberation Sans,sans-serif" font-weight="bold" font-size="19" fill="#e8e8e8" textLength="154" lengthAdjust="spacingAndGlyphs">5000 Programming</text>
<text x="1537" y="251" font-family="Liberation Sans,sans-serif" font-weight="bold" font-size="8" fill="#9a9c9c" textLength="49" lengthAdjust="spacingAndGlyphs">Second Edition</text>
<text x="1421" y="275" font-family="Liberation Sans,sans-serif" font-size="5" fill="#c8b8a8" textLength="160" lengthAdjust="spacingAndGlyphs">Build industrial PLC solutions with Controllogix, CompactLogix, and Studio</text>
<text x="1421" y="281" font-family="Liberation Sans,sans-serif" font-size="5" fill="#c8b8a8" textLength="45" lengthAdjust="spacingAndGlyphs">5000 RSLogix 5000</text>
<text x="1421" y="416" font-family="Liberation Sans,sans-serif" font-weight="bold" font-size="6" fill="#aaa" textLength="27" lengthAdjust="spacingAndGlyphs">Austin Scott</text>
<text x="1541" y="402" font-family="Liberation Sans,sans-serif" font-size="17" fill="#fbe3d0" textLength="37" lengthAdjust="spacingAndGlyphs">Packt&gt;</text>
<text x="1545" y="408" font-family="Liberation Sans,sans-serif" font-size="4" fill="#fbcfae" textLength="26" lengthAdjust="spacingAndGlyphs">www.packt.com</text>
</g>
</g>

<!-- Book 2 -->
<g clip-path="url(#c2)">
<rect x="1612" y="135" width="189" height="289" fill="#b3d3e7"/>
<rect x="1628.500" y="135" width="1.500" height="289" fill="#d5e6f0"/>
<rect x="1612" y="225" width="16" height="39" fill="#034a70"/>
<g fill="none" stroke="#92b9cf" stroke-width="5" filter="url(#bs)">
<path d="M1749 147l24 14v28l-24 14-24-14v-28z"/><path d="M1725 161l-20-12M1773 189l20 14M1749 203v14"/>
<path d="M1662 200l24 14v28l-24 14-24-14v-28z"/><path d="M1638 214l-20-12M1662 256v22M1686 214l39-24M1686 242l40 24"/>
<path d="M1749 252l24 14v28l-24 14-24-14v-28z"/><path d="M1773 266l20-12M1749 308v30"/>
<path d="M1749 336l24 14v28l-24 14-24-14v-28z"/>
</g>
<g filter="url(#bs)">
<path d="M1739 171a10 6 0 0 1 20 0a10 6 0 0 1-20 0" fill="none" stroke="#eaf3f8" stroke-width="2"/>
<path d="M1743 171h4M1752 171h4" stroke="#d63fa0" stroke-width="2"/><path d="M1749 178c-3 3 1 4 0 6" stroke="#fff" fill="none" stroke-width="1.500"/>
<path d="M1652 228c0-12 20-14 21 0 1 6-3 8-4 12h-8l0-3c-7 0-5-5-8-9z" fill="none" stroke="#fff" stroke-width="1.500"/><path d="M1656 226a6 6 0 0 1 12 0" fill="none" stroke="#d63fa0" stroke-width="2"/>
<rect x="1741" y="269" width="17" height="17" fill="#d3e2ea" stroke="#eef5f8" stroke-width="1.500"/><path d="M1745 274h8v6h-6M1748 283h6" stroke="#d63fa0" fill="none" stroke-width="1.500"/>
<text x="1699" y="223" font-family="Liberation Serif,serif" font-size="11" font-weight="bold" fill="#3b7a9c" textLength="83" lengthAdjust="spacingAndGlyphs">Georgios N. Yannakakis</text>
<text x="1730" y="234" font-family="Liberation Serif,serif" font-size="11" font-weight="bold" fill="#3b7a9c" textLength="52" lengthAdjust="spacingAndGlyphs">Julian Togelius</text>
<text x="1638" y="299" font-family="Liberation Sans,sans-serif" font-size="28" fill="#1d6187" textLength="73" lengthAdjust="spacingAndGlyphs">Artificial</text>
<text x="1638" y="326" font-family="Liberation Sans,sans-serif" font-size="28" fill="#1d6187" textLength="102" lengthAdjust="spacingAndGlyphs">Intelligence</text>
<text x="1638" y="352" font-family="Liberation Sans,sans-serif" font-size="28" fill="#1d6187" textLength="96" lengthAdjust="spacingAndGlyphs">and Games</text>
<text x="1638" y="372" font-family="Liberation Sans,sans-serif" font-size="9" fill="#9bc0d4" textLength="51" lengthAdjust="spacingAndGlyphs">Second Edition</text>
<circle cx="1742" cy="402" r="5" fill="none" stroke="#3b6a84" stroke-width="1.200"/>
<text x="1750" y="407" font-family="Liberation Serif,serif" font-size="10" font-weight="bold" fill="#3b6a84" textLength="32" lengthAdjust="spacingAndGlyphs">Springer</text>
</g>
<path d="M1801 384c-6 12-18 24-30 31l10 9h20z" fill="#f1f3f7"/><path d="M1795 394l-15 24" stroke="#a9a4d8" stroke-width="1.500"/>
</g>

<!-- Book 3 partial -->
<path d="M1834 135h-6a10 10 0 0 0-10 10v12h16z" fill="#4a1c14"/>
<rect x="1818" y="157" width="16" height="43" fill="#141414"/>
<rect x="1818" y="200" width="16" height="82" fill="#fcc40f"/>
<rect x="1818" y="282" width="16" height="116" fill="#141414"/>
<path d="M1818 398h16v26h-6a10 10 0 0 1-10-10z" fill="#4a1c14"/>

<!-- Newest -->
<text x="1431" y="497" font-family="DejaVu Sans,sans-serif" font-size="18" fill="#eeeaf0" textLength="72" lengthAdjust="spacingAndGlyphs">Newest</text>

<g clip-path="url(#list)">
<!-- Cover 1 -->
<g clip-path="url(#l1)">
<rect x="1430" y="536" width="97" height="148" fill="#fff"/>
<rect x="1430" y="536" width="97" height="5" fill="#555"/><rect x="1430" y="680" width="97" height="4" fill="#555"/>
<g fill="none" stroke="#8a8f92" stroke-width="1.200" filter="url(#bs)">
<rect x="1459" y="565" width="16" height="12"/><rect x="1450" y="578" width="8" height="7" stroke="#e2b96a"/><circle cx="1508" cy="577" r="5" stroke="#e2a84a"/><circle cx="1491" cy="591" r="6"/><rect x="1438" y="593" width="12" height="5" stroke="#5a9ac0"/><circle cx="1484" cy="566" r="4" stroke="#5aa0d8"/><rect x="1495" y="567" width="11" height="4" stroke="#8ab84a"/><path d="M1462 585h20M1462 590h10M1500 590h12M1505 597h12M1445 603h20" />
<rect x="1467" y="623" width="26" height="12"/><path d="M1441 622v12h10M1454 630v8" stroke="#555"/><circle cx="1514" cy="630" r="5" stroke="#555"/><rect x="1462" y="640" width="9" height="11" stroke="#555"/><rect x="1491" y="640" width="10" height="10" stroke="#555"/><circle cx="1483" cy="646" r="4" stroke="#3a8ac0"/><path d="M1458 640h-8M1505 640h8M1475 656h14" />
</g>
<text x="1459" y="609" font-family="Liberation Serif,serif" font-weight="bold" font-size="7.500" fill="#444" textLength="40" lengthAdjust="spacingAndGlyphs">Concepts of</text>
<text x="1448" y="618" font-family="Liberation Serif,serif" font-weight="bold" font-size="7.500" fill="#444" textLength="63" lengthAdjust="spacingAndGlyphs">Computer Science</text>
<text x="1464" y="673" font-family="Liberation Serif,serif" font-weight="bold" font-size="4.500" fill="#555" textLength="30" lengthAdjust="spacingAndGlyphs">Sanjeev Thakur</text>
<path d="M1527 660c-3 8-8 14-13 18l6 6h7z" fill="#dfe3ea"/>
</g>
<!-- Cover 2 -->
<g clip-path="url(#l2)">
<rect x="1430" y="705" width="97" height="148" fill="#14b6bf"/>
<rect x="1430" y="705" width="3" height="148" fill="#d0402c"/>
<rect x="1441" y="720" width="22" height="24" rx="4" fill="#a7ecef"/>
<rect x="1454" y="738" width="22" height="24" rx="4" fill="#85dbe0"/>
<rect x="1462" y="811" width="22" height="24" rx="4" fill="#85dfe3"/>
<rect x="1445" y="824" width="23" height="25" rx="4" fill="#00d8e0"/>
<rect x="1469" y="836" width="23" height="20" rx="4" fill="#a8f0f0"/>
<rect x="1499" y="821" width="22" height="24" rx="4" fill="#4cd2d6"/>
<rect x="1440" y="797" width="22" height="22" rx="4" fill="#0fbcc4" stroke="#069aa2"/>
<path d="M1493 705h22c-2 12-1 20 2 32 3 14-4 25-16 28l-10 8-9-6c3-12 7-23 7-35 0-10 3-18 4-27z" fill="#fff" stroke="#555" stroke-width=".6"/>
<path d="M1487 770l-37 42" stroke="#111" stroke-width="2.500"/><path d="M1493 764l-5 6" stroke="#ddd" stroke-width="4"/>
<path d="M1440 810h19M1450 800v20M1443 803l14 14M1457 803l-14 14" stroke="#123" stroke-width=".6"/>
<text x="1442" y="728" font-family="Liberation Sans,sans-serif" font-size="4.500" font-weight="bold" fill="#d9545a" textLength="20" lengthAdjust="spacingAndGlyphs">Donald Kossmann</text>
<g font-family="Liberation Sans,sans-serif" font-size="10" fill="#c9f5f6"><text x="1442" y="782" textLength="54" lengthAdjust="spacing">THE MAGIC</text><text x="1449" y="795" textLength="72" lengthAdjust="spacing">OF COMPUTER</text><text x="1469" y="808" textLength="40" lengthAdjust="spacing">SCIENCE</text></g>
<path d="M1527 830c-3 8-8 14-13 18l6 6h7z" fill="#dfe3ea"/>
</g>
<!-- Cover 3 -->
<g clip-path="url(#l3)">
<rect x="1430" y="874" width="97" height="110" fill="#fff"/>
<rect x="1433" y="908" width="91" height="76" fill="#d9cfba"/>
<rect x="1433" y="877" width="77" height="31" fill="#0a0a0a"/><rect x="1433" y="886" width="77" height="4" fill="#12509a"/>
<rect x="1447" y="910" width="77" height="28" fill="#0a0a0a" stroke="#999" stroke-width=".8"/><rect x="1447" y="919" width="77" height="4" fill="#8a2a22"/>
<rect x="1461" y="949" width="48" height="35" fill="#741a12"/>
<text x="1475" y="904" font-family="Liberation Serif,serif" font-size="5" fill="#bbb">Edited by Phillip A. Laplante</text>
<text x="1480" y="934" font-family="Liberation Serif,serif" font-size="5" fill="#bbb">Edited by Phillip A. Laplante</text>
<g font-family="Liberation Serif,serif" fill="#e8d0c0"><text x="1468" y="956" font-size="5.500">Encyclopedia of</text><text x="1466" y="966" font-size="9" textLength="36" lengthAdjust="spacingAndGlyphs">Computer</text><text x="1464" y="977" font-size="9" textLength="42" lengthAdjust="spacingAndGlyphs">Science and</text></g>
</g>

<g class="p">
<text x="1559" y="552" textLength="172" lengthAdjust="spacingAndGlyphs">Concepts of Computer</text>
<text x="1559" y="573" textLength="58" lengthAdjust="spacingAndGlyphs">Science</text>
<text x="1559" y="597" textLength="116" lengthAdjust="spacingAndGlyphs">Sanjeev Thakur</text>
<text x="1559" y="721" textLength="179" lengthAdjust="spacingAndGlyphs">The Magic of Computer</text>
<text x="1559" y="742" textLength="58" lengthAdjust="spacingAndGlyphs">Science</text>
<text x="1559" y="766" textLength="139" lengthAdjust="spacingAndGlyphs">Donald Kossmann</text>
<text x="1559" y="890" textLength="202" lengthAdjust="spacingAndGlyphs">Encyclopedia of Computer</text>
<text x="1559" y="911" textLength="185" lengthAdjust="spacingAndGlyphs">Science and Technology</text>
<text x="1559" y="935" textLength="137" lengthAdjust="spacingAndGlyphs">Phillip A. Laplante</text>
</g>
<g font-family="DejaVu Sans,sans-serif" font-size="20" fill="#f0eef2">
<text x="1559" y="628" textLength="46" lengthAdjust="spacingAndGlyphs">Free</text>
<text x="1559" y="797" textLength="46" lengthAdjust="spacingAndGlyphs">Free</text>
<text x="1559" y="966" textLength="46" lengthAdjust="spacingAndGlyphs">Free</text>
</g>
<g font-family="DejaVu Sans,sans-serif" font-size="15" fill="#ece9ee">
<text x="1771" y="627" textLength="10" lengthAdjust="spacingAndGlyphs">5</text>
<text x="1765" y="796" textLength="11" lengthAdjust="spacingAndGlyphs">0</text>
<text x="1765" y="965" textLength="11" lengthAdjust="spacingAndGlyphs">0</text>
</g>
<g font-family="DejaVu Sans,sans-serif" font-size="14" fill="#7d7884">
<text x="1787" y="627" textLength="14" lengthAdjust="spacingAndGlyphs">(1)</text>
<text x="1782" y="796" textLength="19" lengthAdjust="spacingAndGlyphs">(0)</text>
<text x="1782" y="965" textLength="19" lengthAdjust="spacingAndGlyphs">(0)</text>
</g>
<g fill="#ffdd4f">
<path d="M1757 612l2.600 5.400 5.900.8-4.300 4.100 1 5.900-5.200-2.800-5.200 2.800 1-5.900-4.300-4.100 5.900-.8z"/>
<path d="M1751 781l2.600 5.400 5.900.8-4.300 4.100 1 5.900-5.200-2.800-5.200 2.800 1-5.900-4.300-4.100 5.900-.8z"/>
<path d="M1751 950l2.600 5.400 5.900.8-4.300 4.100 1 5.900-5.200-2.800-5.200 2.800 1-5.900-4.300-4.100 5.900-.8z"/>
</g>
</g>
<rect x="1559" y="989" width="114" height="4.500" rx="2.200" fill="#eeeeee"/>

<!-- emulator toolbar -->
<rect x="1835" y="39" width="80" height="642" fill="#efefef"/>
<path d="M1851 58h9M1887 52l8 8M1895 52l-8 8" stroke="#5b7b8e" stroke-width="1.600"/>
<g class="em">
<path d="M1874 88v12M1866 92a11.500 11.500 0 1 0 16 0"/>
<path d="M1861 148h6l8-6v22l-8-6h-6zM1880 147c2 3 2 9 0 12M1884 144c3 5 3 13 0 18"/>
<path d="M1861 203h6l8-6v22l-8-6h-6zM1880 202c2 3 2 9 0 12"/>
<path d="M1862 260h6l3-5h8l3 5h6v14h-26z"/><circle cx="1875" cy="265" r="4"/><path d="M1888 256h.5" />
<circle cx="1872" cy="315" r="10"/><path d="M1879 323l7 7M1868 315h8M1872 311v8"/>
<rect x="1862" y="363" width="13" height="23" rx="1"/><path d="M1868 366h1"/><path d="M1879 364c6 1 9 5 9 10s-3 9-9 11M1879 364l3-3M1879 364l4 2"/>
<rect x="1874" y="418" width="13" height="23" rx="1"/><path d="M1881 421h1"/><path d="M1870 419c-6 1-9 5-9 10s3 9 9 11M1870 419l-3-3M1870 419l-4 2"/>
<path d="M1882 476v15l-13-7.500z"/>
<circle cx="1874" cy="538" r="8.500"/>
<rect x="1867" y="586" width="14" height="13" rx="1"/>
</g>
<g fill="#5b7b8e"><circle cx="1866" cy="648" r="2.300"/><circle cx="1874" cy="648" r="2.300"/><circle cx="1882" cy="648" r="2.300"/></g>
<rect x="1835" y="38" width="81" height="1.500" fill="#222"/>
<rect x="1915" y="38" width="1" height="644" fill="#222"/>
<rect x="1835" y="681" width="81" height="1.500" fill="#0b2a3a"/>
</svg>
</body></html>
